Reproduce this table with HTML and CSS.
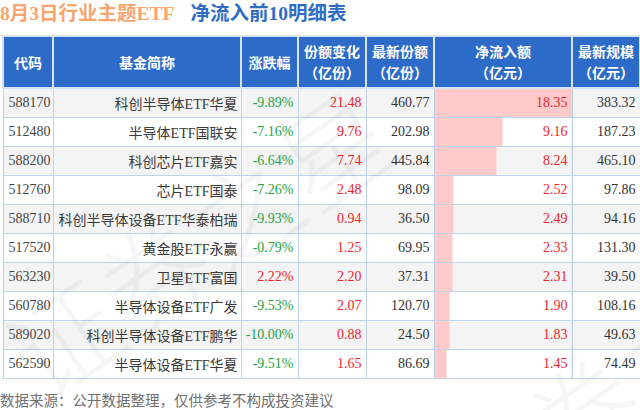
FILE: index.html
```html
<!DOCTYPE html>
<html lang="zh">
<head>
<meta charset="utf-8">
<link rel="stylesheet" href="styles.css">
</head>
<body>
<div class="page">
  <div class="title"><span class="t-orange">8月3日行业主题ETF</span><span class="t-blue">净流入前10明细表</span></div>
  <table class="etf">
    <colgroup>
      <col class="c-code"><col class="c-name"><col class="c-pct"><col class="c-chg"><col class="c-last"><col class="c-flow"><col class="c-scale">
    </colgroup>
    <thead>
      <tr>
        <th>代码</th>
        <th>基金简称</th>
        <th>涨跌幅</th>
        <th>份额变化<br>（亿份）</th>
        <th>最新份额<br>（亿份）</th>
        <th>净流入额<br>（亿元）</th>
        <th>最新规模<br>（亿元）</th>
      </tr>
    </thead>
    <tbody>
      <tr><td class="code">588170</td><td class="name">科创半导体ETF华夏</td><td class="num down">-9.89%</td><td class="num red">21.48</td><td class="num">460.77</td><td class="num red flow" style="--w:100%">18.35</td><td class="num">383.32</td></tr>
      <tr><td class="code">512480</td><td class="name">半导体ETF国联安</td><td class="num down">-7.16%</td><td class="num red">9.76</td><td class="num">202.98</td><td class="num red flow" style="--w:49.9%">9.16</td><td class="num">187.23</td></tr>
      <tr><td class="code">588200</td><td class="name">科创芯片ETF嘉实</td><td class="num down">-6.64%</td><td class="num red">7.74</td><td class="num">445.84</td><td class="num red flow" style="--w:44.9%">8.24</td><td class="num">465.10</td></tr>
      <tr><td class="code">512760</td><td class="name">芯片ETF国泰</td><td class="num down">-7.26%</td><td class="num red">2.48</td><td class="num">98.09</td><td class="num red flow" style="--w:14.2%">2.52</td><td class="num">97.86</td></tr>
      <tr><td class="code">588710</td><td class="name">科创半导体设备ETF华泰柏瑞</td><td class="num down">-9.93%</td><td class="num red">0.94</td><td class="num">36.50</td><td class="num red flow" style="--w:14%">2.49</td><td class="num">94.16</td></tr>
      <tr><td class="code">517520</td><td class="name">黄金股ETF永赢</td><td class="num down">-0.79%</td><td class="num red">1.25</td><td class="num">69.95</td><td class="num red flow" style="--w:13.2%">2.33</td><td class="num">131.30</td></tr>
      <tr><td class="code">563230</td><td class="name">卫星ETF富国</td><td class="num red">2.22%</td><td class="num red">2.20</td><td class="num">37.31</td><td class="num red flow" style="--w:13%">2.31</td><td class="num">39.50</td></tr>
      <tr><td class="code">560780</td><td class="name">半导体设备ETF广发</td><td class="num down">-9.53%</td><td class="num red">2.07</td><td class="num">120.70</td><td class="num red flow" style="--w:11%">1.90</td><td class="num">108.16</td></tr>
      <tr><td class="code">589020</td><td class="name">科创半导体设备ETF鹏华</td><td class="num down">-10.00%</td><td class="num red">0.88</td><td class="num">24.50</td><td class="num red flow" style="--w:10.6%">1.83</td><td class="num">49.63</td></tr>
      <tr><td class="code">562590</td><td class="name">半导体设备ETF华夏</td><td class="num down">-9.51%</td><td class="num red">1.65</td><td class="num">86.69</td><td class="num red flow" style="--w:8.5%">1.45</td><td class="num">74.49</td></tr>
    </tbody>
  </table>
  <div class="source">数据来源：公开数据整理，仅供参考不构成投资建议</div>
  <div class="wm wm1">证券之星</div>
  <div class="wm wm2">证券之星</div>
</div>
</body>
</html>
```
FILE: styles.css
```css
html, body {
  margin: 0;
  padding: 0;
  background: #ffffff;
}
body {
  font-family: "Liberation Serif", "Noto Sans CJK SC", serif;
  color: #333333;
}
.page {
  position: relative;
  width: 640px;
  height: 410px;
  overflow: hidden;
}
.title {
  height: 36px;
  line-height: 28px;
  font-size: 19.5px;
  font-weight: bold;
  white-space: nowrap;
  border-bottom: 1px solid #e2e2e2;
  box-sizing: border-box;
}
.t-orange {
  color: #f7a46e;
  margin-right: 16px;
}
.t-blue {
  color: #2f6cc6;
}
.etf {
  border-collapse: collapse;
  table-layout: fixed;
  width: 637px;
  margin-left: 2px;
  font-size: 14px;
}
.c-code { width: 50px; }
.c-name { width: 188px; }
.c-pct { width: 57px; }
.c-chg { width: 68px; }
.c-last { width: 68px; }
.c-flow { width: 138px; }
.c-scale { width: 68px; }
.etf th {
  background: #2d6bc8;
  color: #ffffff;
  font-weight: bold;
  font-size: 14px;
  line-height: 21px;
  height: 50px;
  padding: 0;
  text-align: center;
  border: 2px solid #d6e2f2;
  border-top: 1px solid #d6e2f2;
  font-family: "Noto Sans CJK SC", sans-serif;
}
.etf td {
  height: 28px;
  padding: 0 4px 0 4px;
  border: 1px solid #bfd2e8;
  white-space: nowrap;
  overflow: hidden;
}
.etf tbody tr:nth-child(odd) td {
  background-color: #f4f4f4;
}
.etf tbody tr:nth-child(even) td {
  background-color: #ffffff;
}
.etf td.code {
  text-align: left;
  padding-left: 5px;
  color: #444444;
}
.etf td.name {
  text-align: right;
  padding-left: 0;
  padding-right: 3px;
  color: #3a3a3a;
}
.num {
  text-align: right;
}
.red {
  color: #f2252b;
}
.down {
  color: #22a445;
}
.etf tbody td.flow {
  background-image: linear-gradient(to right, #ffcaca 0, #ffcaca var(--w), transparent var(--w));
}
.source {
  margin-top: 12px;
  font-size: 14.5px;
  color: #707070;
  font-family: "Noto Sans CJK SC", sans-serif;
  white-space: nowrap;
  line-height: 18px;
}
.wm {
  position: absolute;
  font-family: "Noto Sans CJK SC", sans-serif;
  font-size: 110px;
  font-weight: 300;
  color: rgba(0, 0, 0, 0.035);
  white-space: nowrap;
  transform: rotate(-35deg);
  transform-origin: left top;
  pointer-events: none;
}
.wm1 {
  left: -30px;
  top: 300px;
}
.wm2 {
  left: 400px;
  top: 440px;
}
```
